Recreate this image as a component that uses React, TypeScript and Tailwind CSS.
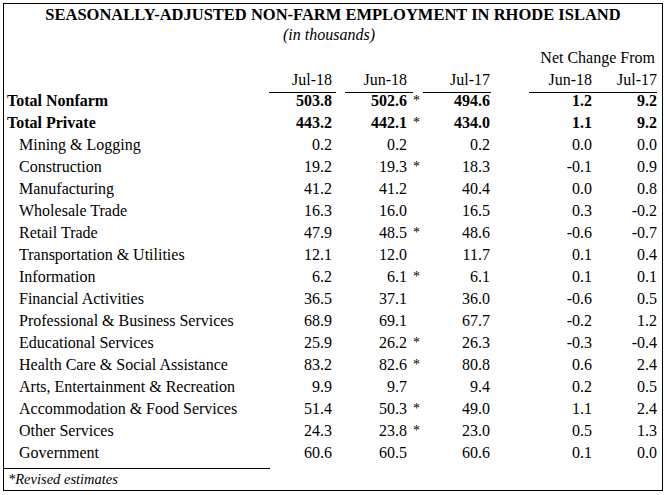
import React from "react";

type Row = { label: string; bold?: boolean; v: string[]; star?: boolean };

const rows: Row[] = [
  { label: "Total Nonfarm", bold: true, v: ["503.8", "502.6", "494.6", "1.2", "9.2"], star: true },
  { label: "Total Private", bold: true, v: ["443.2", "442.1", "434.0", "1.1", "9.2"], star: true },
  { label: "Mining & Logging", v: ["0.2", "0.2", "0.2", "0.0", "0.0"] },
  { label: "Construction", v: ["19.2", "19.3", "18.3", "-0.1", "0.9"], star: true },
  { label: "Manufacturing", v: ["41.2", "41.2", "40.4", "0.0", "0.8"] },
  { label: "Wholesale Trade", v: ["16.3", "16.0", "16.5", "0.3", "-0.2"] },
  { label: "Retail Trade", v: ["47.9", "48.5", "48.6", "-0.6", "-0.7"], star: true },
  { label: "Transportation & Utilities", v: ["12.1", "12.0", "11.7", "0.1", "0.4"] },
  { label: "Information", v: ["6.2", "6.1", "6.1", "0.1", "0.1"], star: true },
  { label: "Financial Activities", v: ["36.5", "37.1", "36.0", "-0.6", "0.5"] },
  { label: "Professional & Business Services", v: ["68.9", "69.1", "67.7", "-0.2", "1.2"] },
  { label: "Educational Services", v: ["25.9", "26.2", "26.3", "-0.3", "-0.4"], star: true },
  { label: "Health Care & Social Assistance", v: ["83.2", "82.6", "80.8", "0.6", "2.4"], star: true },
  { label: "Arts, Entertainment & Recreation", v: ["9.9", "9.7", "9.4", "0.2", "0.5"] },
  { label: "Accommodation & Food Services", v: ["51.4", "50.3", "49.0", "1.1", "2.4"], star: true },
  { label: "Other Services", v: ["24.3", "23.8", "23.0", "0.5", "1.3"], star: true },
  { label: "Government", v: ["60.6", "60.5", "60.6", "0.1", "0.0"] },
];

const cols = "grid grid-cols-[265px_67px_9px_68px_10px_68px_38px_63px_65px]";

export default function App() {
  return (
    <div className="bg-white w-[667px] h-[495px] pt-[3px] pl-[3px] text-black" style={{ fontFamily: '"Liberation Serif", "Times New Roman", serif' }}>
      <div className="w-[660px] h-[488px] border border-black flex flex-col">
        <div className="pt-[1px] h-[21px] leading-[20px] text-[16.5px] font-bold text-center">
          SEASONALLY-ADJUSTED NON-FARM EMPLOYMENT IN RHODE ISLAND
        </div>
        <div className="mt-[1px] h-[18px] leading-[18px] text-[16px] italic text-center pr-[8px]">(in thousands)</div>
        <div className={`${cols} mt-[4px] text-[16px]`}>
          <div className="col-start-8 col-span-2 leading-[20px] h-[22px] text-right pr-[2px] whitespace-nowrap">Net Change From</div>
          <div className="col-start-2 leading-[20px] h-[23px] pb-[2px] border-b border-black text-right pr-[4px]">Jul-18</div>
          <div className="col-start-4 leading-[20px] h-[23px] pb-[2px] border-b border-black text-right pr-[6px]">Jun-18</div>
          <div className="col-start-6 leading-[20px] h-[23px] pb-[2px] border-b border-black text-right pr-[1px]">Jul-17</div>
          <div className="col-start-8 leading-[20px] h-[23px] pb-[2px] border-b border-black text-right">Jun-18</div>
          <div className="col-start-9 leading-[20px] h-[23px] pb-[2px] border-b border-black text-right">Jul-17</div>
          {rows.map((r) => (
            <React.Fragment key={r.label}>
              <div className={`h-[22px] leading-[16px] whitespace-nowrap ${r.bold ? "font-bold pl-[3px]" : "pl-[15px]"}`}>{r.label}</div>
              <div className={`h-[22px] leading-[16px] text-right pr-[4px] ${r.bold ? "font-bold" : ""}`}>{r.v[0]}</div>
              <div />
              <div className={`h-[22px] leading-[16px] text-right pr-[6px] ${r.bold ? "font-bold" : ""}`}>{r.v[1]}</div>
              <div className="h-[22px] leading-[16px] text-[14px]">{r.star ? "*" : ""}</div>
              <div className={`h-[22px] leading-[16px] text-right pr-[1px] ${r.bold ? "font-bold" : ""}`}>{r.v[2]}</div>
              <div />
              <div className={`h-[22px] leading-[16px] text-right ${r.bold ? "font-bold" : ""}`}>{r.v[3]}</div>
              <div className={`h-[22px] leading-[16px] text-right ${r.bold ? "font-bold" : ""}`}>{r.v[4]}</div>
            </React.Fragment>
          ))}
        </div>
        <div className="w-[266px] h-[1px] bg-black mt-[1px]" />
        <div className="mt-[1px] h-[18px] leading-[18px] text-[14.5px] italic pl-[4px]">*Revised estimates</div>
      </div>
    </div>
  );
}
